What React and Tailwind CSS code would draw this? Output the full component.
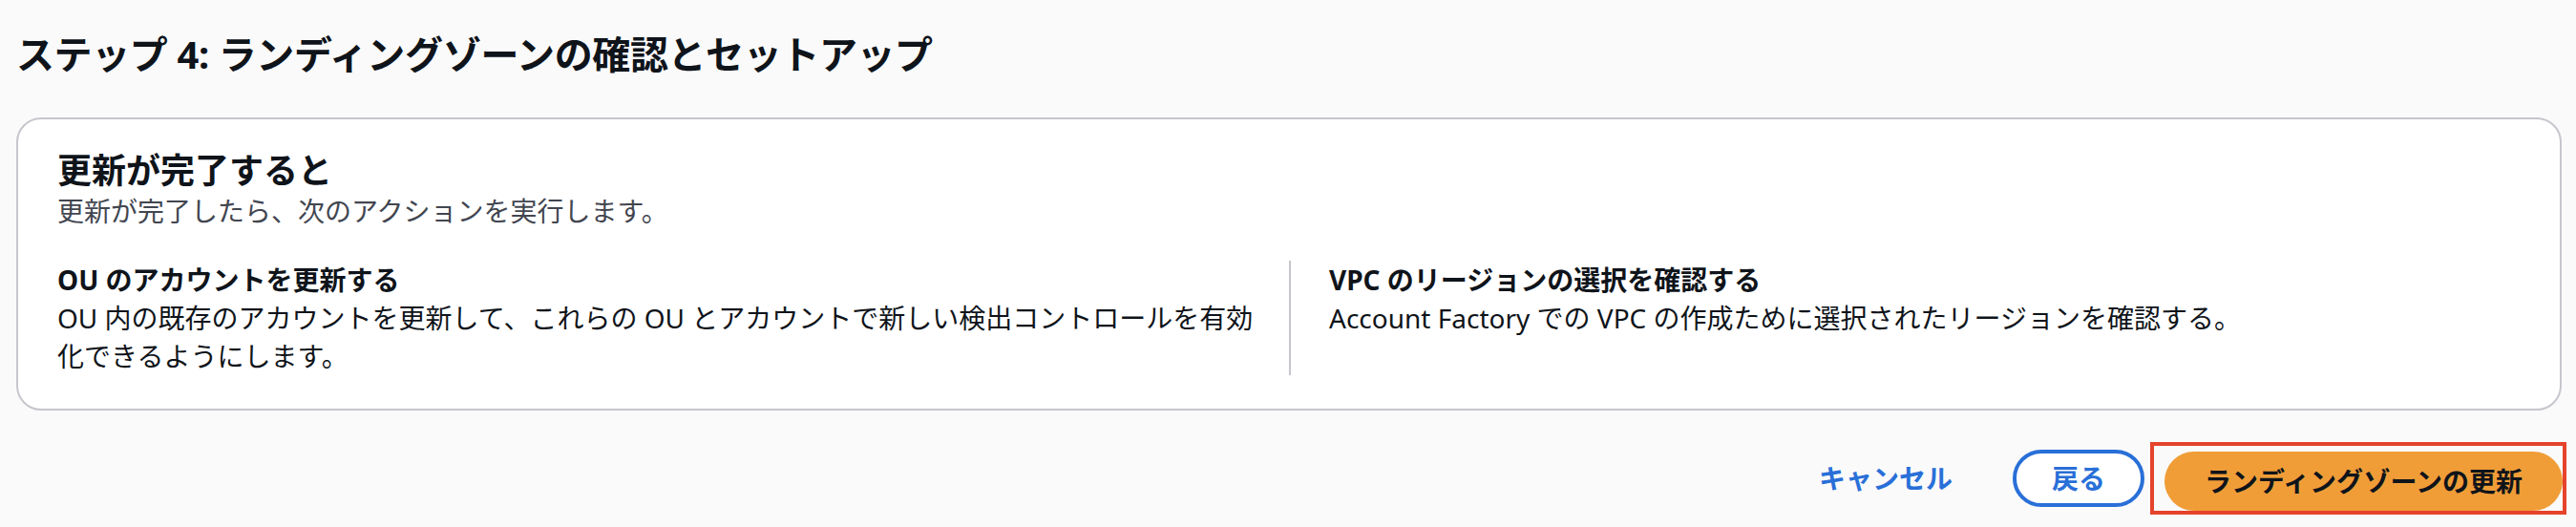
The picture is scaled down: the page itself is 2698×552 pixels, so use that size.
import React from "react";

const fontStack = "font-['Noto_Sans','Noto_Sans_CJK_JP',sans-serif]";

const Column = ({ title, children, divider }) => (
  <div
    className={
      divider
        ? "border-l-2 border-[#c6c6cd] pl-[40px]"
        : "pr-[34px]"
    }
  >
    <h3 className="text-[28px] leading-[40px] font-bold">{title}</h3>
    <p className="text-[28px] leading-[40px]">{children}</p>
  </div>
);

const App = () => {
  return (
    <div className={`min-h-screen bg-[#fafafa] text-[#0f141a] ${fontStack}`}>
      <div className="pt-[33px] pl-[17px]">
        <h1 className="text-[40px] leading-[48px] font-bold tracking-[-0.4px]">
          ステップ 4: ランディングゾーンの確認とセットアップ
        </h1>
      </div>

      <div className="mt-[42px] ml-[17px] mr-[15px] rounded-[26px] border-2 border-[#c6c6cd] bg-white px-[41px] pt-[32px] pb-[35px]">
        <h2 className="text-[36px] leading-[44px] font-bold">更新が完了すると</h2>
        <p className="text-[28px] leading-[40px] text-[#424650]">
          更新が完了したら、次のアクションを実行します。
        </p>

        <div className="mt-[32px] grid grid-cols-2">
          <Column title="OU のアカウントを更新する">
            OU 内の既存のアカウントを更新して、これらの OU とアカウントで新しい検出コントロールを有効
            <br />
            化できるようにします。
          </Column>
          <Column title="VPC のリージョンの選択を確認する" divider>
            Account Factory での VPC の作成ために選択されたリージョンを確認する。
          </Column>
        </div>
      </div>

      <div className="mt-[33px] flex items-center justify-end pr-[10px]">
        <button className="text-[28px] leading-[40px] font-bold text-[#296fd8]">
          キャンセル
        </button>
        <button className="ml-[63px] rounded-full border-[4px] border-[#296fd8] bg-white px-[37px] py-[6px] text-[28px] leading-[40px] font-bold text-[#296fd8]">
          戻る
        </button>
        <div className="ml-[6px] border-[4px] border-[#e5432b] pl-[11px] pt-[6px]">
          <button className="rounded-full bg-[#f09d38] px-[42px] py-[11px] text-[28px] leading-[40px] font-bold text-[#0f141a]">
            ランディングゾーンの更新
          </button>
        </div>
      </div>
    </div>
  );
};

export default App;
